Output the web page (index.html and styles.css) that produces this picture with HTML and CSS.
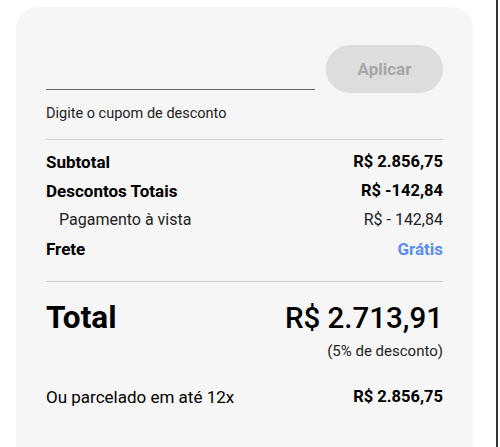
FILE: index.html
```html
<!DOCTYPE html>
<html lang="pt-BR">
<head>
    <meta charset="UTF-8">
    <meta name="viewport" content="width=device-width, initial-scale=1.0">
    <title>Resumo do pedido</title>
    <link rel="stylesheet" href="styles.css">
</head>
<body>
    <div class="page">
        <div class="resumo">
            <!-- cupom -->
            <div class="cupom">
                <input type="text" class="cupom-input">
                <button class="btn-aplicar">Aplicar</button>
            </div>
            <p class="cupom-label">Digite o cupom de desconto</p>

            <div class="linhas">
                <div class="linha forte">
                    <span>Subtotal</span>
                    <span class="num">R$ 2.856,75</span>
                </div>
                <div class="linha forte">
                    <span>Descontos Totais</span>
                    <span class="num">R$ -142,84</span>
                </div>
                <div class="linha sub">
                    <span>Pagamento à vista</span>
                    <span>R$ - 142,84</span>
                </div>
                <div class="linha forte">
                    <span>Frete</span>
                    <span class="gratis">Grátis</span>
                </div>
            </div>

            <div class="total">
                <span class="total-label">Total</span>
                <div class="total-valor">
                    <span class="valor">R$ 2.713,91</span>
                    <span class="desconto">(5% de desconto)</span>
                </div>
            </div>

            <div class="linha parcelado">
                <span>Ou parcelado em até 12x</span>
                <span class="bold num">R$ 2.856,75</span>
            </div>
        </div>
    </div>
</body>
</html>
```

FILE: styles.css
```css
*{
    margin: 0;
    padding: 0;
    box-sizing: border-box;
}
body{
    background: #fff;
    font-family: Roboto, "Noto Sans", sans-serif;
    color: #000;
}
.page{
    width: 498px;
    height: 447px;
    border-right: 2px solid #333;
    padding: 7px 0 0 16px;
    overflow: hidden;
}
.resumo{
    width: 457px;
    height: 460px;
    background: #f6f6f6;
    border-radius: 22px;
    padding: 38px 30px 0 30px;
}
.cupom{
    display: flex;
    align-items: flex-end;
    justify-content: space-between;
}
.cupom-input{
    width: 269px;
    height: 36px;
    border: none;
    border-bottom: 1px solid #666;
    background: transparent;
    outline: none;
    margin-bottom: 3px;
}
.btn-aplicar{
    width: 117px;
    height: 48px;
    border: none;
    border-radius: 24px;
    background: #dddddd;
    color: #a6a6a6;
    font-family: inherit;
    font-size: 17px;
    font-weight: 700;
}
.cupom-label{
    font-size: 14.5px;
    color: #222;
    margin-top: 12px;
    padding-bottom: 17px;
    border-bottom: 1px solid #cfcfcf;
}
.linhas{
    padding: 7px 0 18px;
    border-bottom: 1px solid #cfcfcf;
}
.linha{
    display: flex;
    justify-content: space-between;
    align-items: center;
    height: 29px;
}
.forte{
    font-size: 17px;
    font-weight: 700;
}
.num{
    font-size: 16.5px;
}
.sub{
    font-size: 16px;
    color: #222;
    padding-left: 13px;
}
.gratis{
    color: #5b8def;
}
.total{
    display: flex;
    justify-content: space-between;
    align-items: flex-start;
    padding-top: 15px;
}
.total-label{
    font-size: 31.5px;
    font-weight: 700;
    line-height: 42px;
}
.total-valor{
    display: flex;
    flex-direction: column;
    align-items: flex-end;
}
.valor{
    font-size: 29.5px;
    font-weight: 500;
    line-height: 42px;
}
.desconto{
    font-size: 15px;
    color: #222;
    margin-top: 3px;
}
.parcelado{
    margin-top: 22px;
    font-size: 17px;
}
.bold{
    font-weight: 700;
}
```
